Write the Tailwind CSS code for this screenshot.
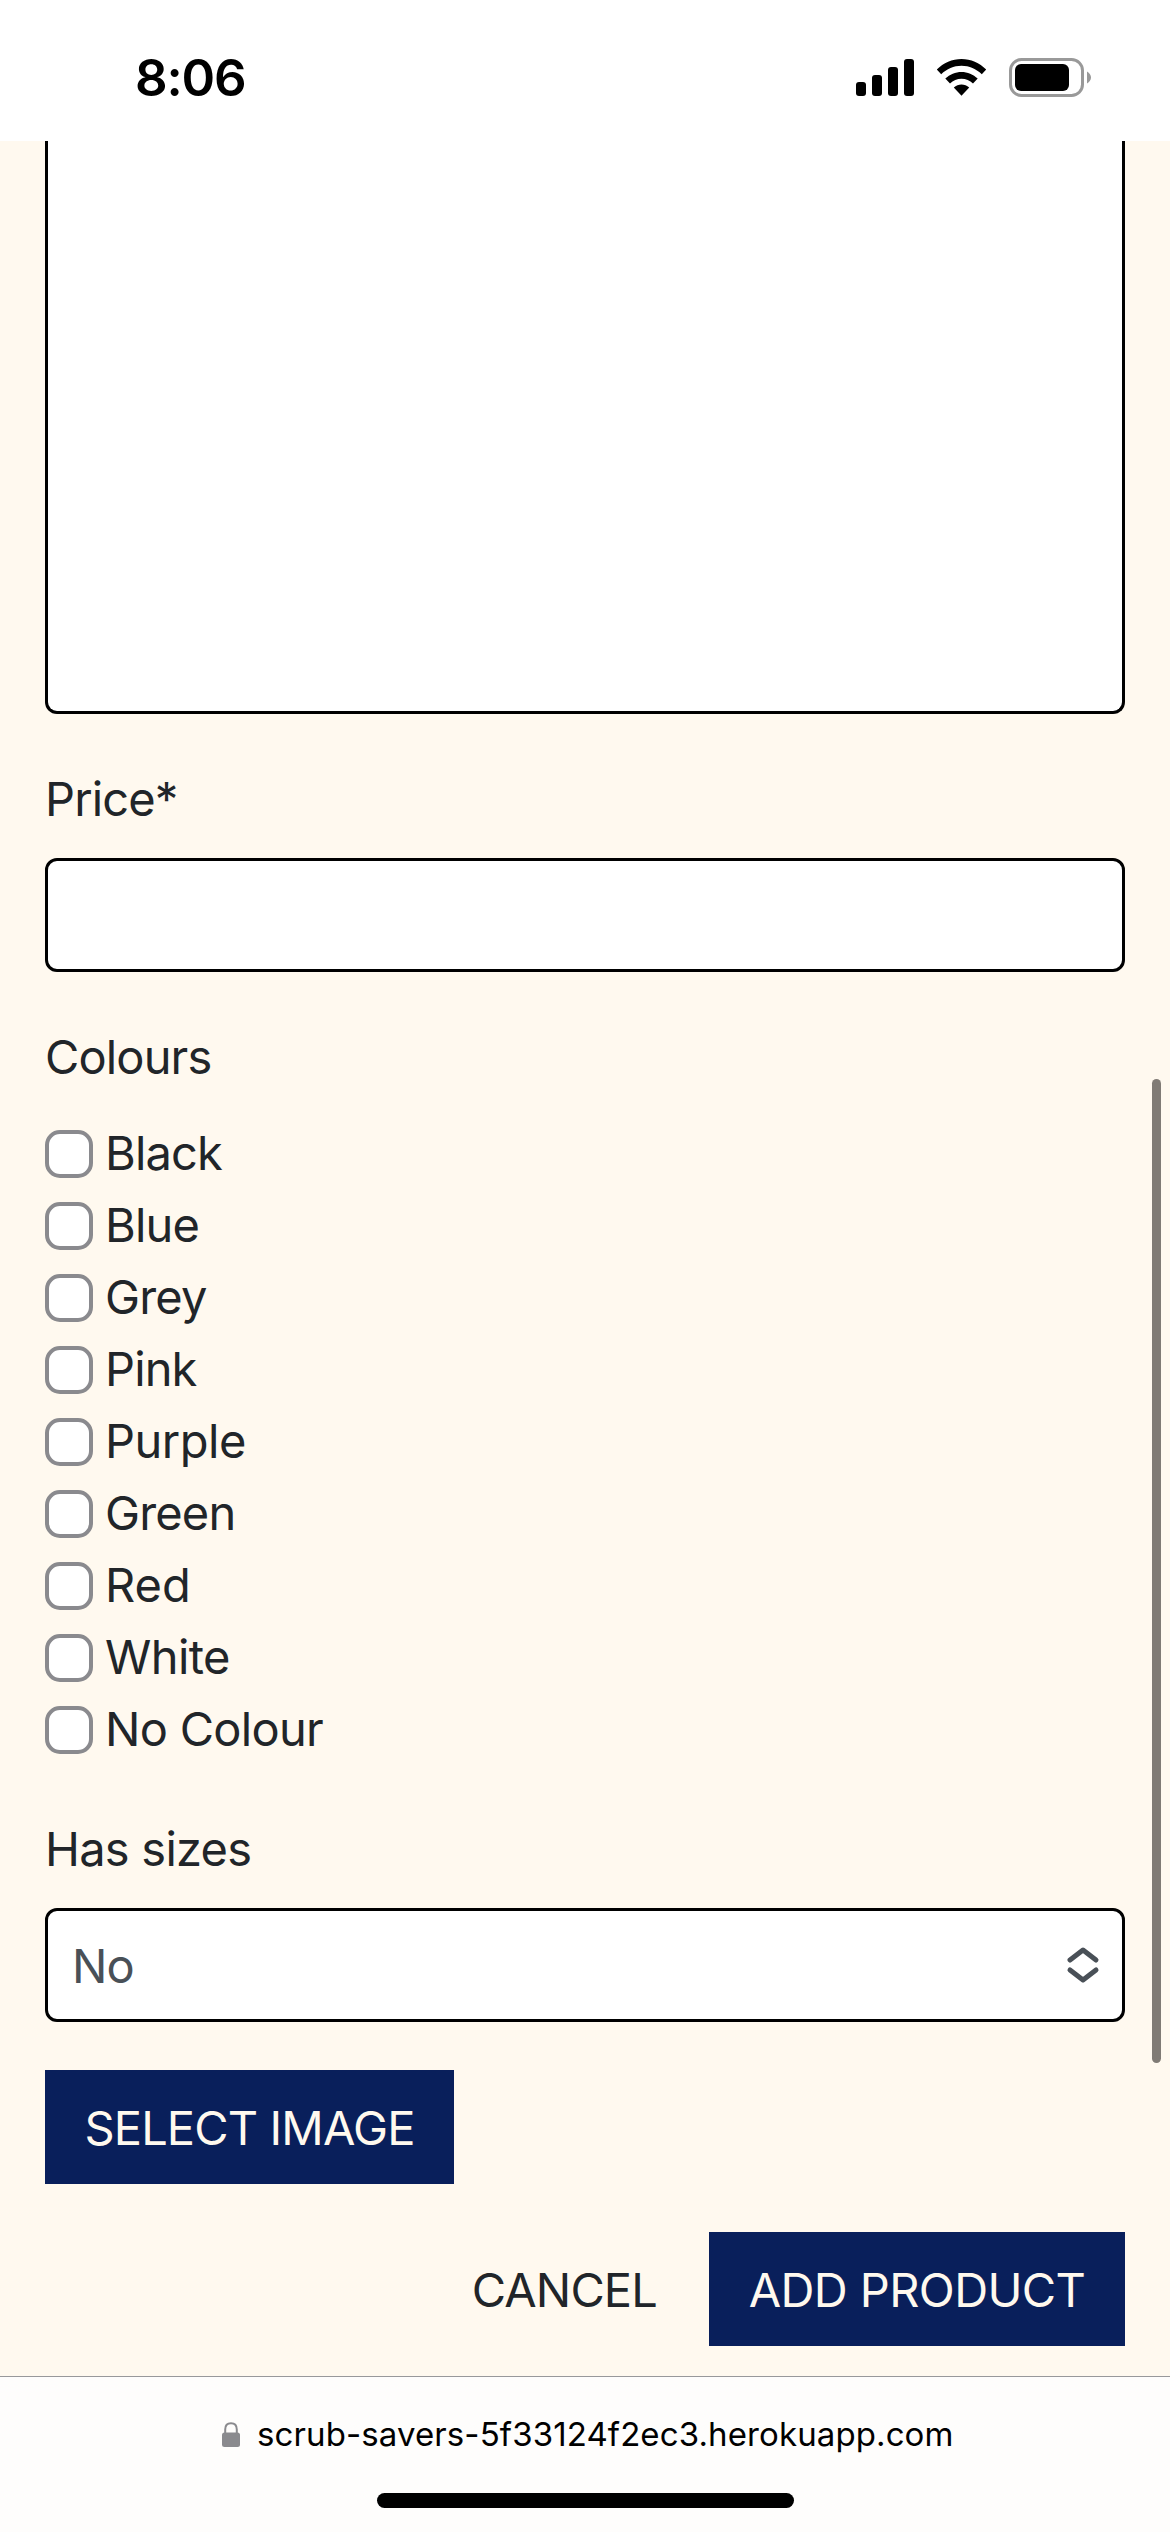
<!DOCTYPE html>
<html lang="en">
<head>
<meta charset="utf-8">
<title>Add product</title>
<script src="https://cdn.jsdelivr.net/npm/@tailwindcss/browser@4"></script>
</head>
<body class="w-[1170px] h-[2532px] overflow-hidden flex flex-col bg-[#fff9ef] text-[#212529] font-['Inter',sans-serif] text-[47px] tracking-[-0.85px]">

  <!-- Status bar -->
  <header class="h-[141px] shrink-0 bg-white text-black flex justify-between pl-[135px] pr-[77px]">
    <div class="mt-[46px] h-[62px] leading-[64px] text-[51px] font-semibold tracking-[-1.2px]">8:06</div>
    <svg class="mt-[54px] w-[238px] h-[48px] shrink-0" viewBox="855 54 238 48" fill="none">
      <g fill="#000">
        <rect x="856" y="82" width="10" height="14" rx="3"/>
        <rect x="872" y="75" width="10" height="21" rx="3"/>
        <rect x="888" y="67" width="10" height="29" rx="3"/>
        <rect x="904" y="59" width="10" height="37" rx="3"/>
        <path d="M936.800 69.600C943.500 62.800 952.200 59 961.500 59C970.800 59 979.500 62.800 986.200 69.600L981.800 74.300C976.300 68.900 969.200 65.800 961.500 65.800C953.800 65.800 946.700 68.900 941.200 74.300Z"/>
        <path d="M945.300 78.600C949.800 74.300 955.500 71.900 961.500 71.900C967.500 71.900 973.200 74.300 977.700 78.600L973 83.600C969.900 80.500 965.800 78.800 961.500 78.800C957.200 78.800 953.100 80.500 950 83.600Z"/>
        <path d="M953.800 87.500C956 85.600 958.700 84.600 961.500 84.600C964.300 84.600 967 85.600 969.200 87.500L961.500 95.800Z"/>
      </g>
      <rect x="1010.500" y="59.500" width="72" height="36" rx="11" stroke="#999" stroke-width="3"/>
      <rect x="1015" y="64" width="54" height="27" rx="6" fill="#000"/>
      <path d="M1087 71.500C1089.500 73 1091 75.200 1091 77.500C1091 79.800 1089.500 82 1087 83.500Z" fill="#999"/>
    </svg>
  </header>

  <!-- Product form -->
  <main class="relative h-[2235px] shrink-0 px-[45px]">
    <div class="h-[573px] bg-white border-3 border-t-0 border-black rounded-b-[12px]"></div>

    <div class="mt-12 h-18 leading-[74px]">Price*</div>
    <div class="mt-6 h-[114px] bg-white border-3 border-black rounded-[12px]"></div>

    <div class="mt-12 h-18 leading-[74px]">Colours</div>
    <ul class="mt-6 leading-[74px]">
      <li class="h-18 flex gap-3"><span class="mt-[14px] size-12 bg-white border-4 border-[#8a8a8e] rounded-[15px]"></span>Black</li>
      <li class="h-18 flex gap-3"><span class="mt-[14px] size-12 bg-white border-4 border-[#8a8a8e] rounded-[15px]"></span>Blue</li>
      <li class="h-18 flex gap-3"><span class="mt-[14px] size-12 bg-white border-4 border-[#8a8a8e] rounded-[15px]"></span>Grey</li>
      <li class="h-18 flex gap-3"><span class="mt-[14px] size-12 bg-white border-4 border-[#8a8a8e] rounded-[15px]"></span>Pink</li>
      <li class="h-18 flex gap-3 tracking-[-0.5px]"><span class="mt-[14px] size-12 bg-white border-4 border-[#8a8a8e] rounded-[15px]"></span>Purple</li>
      <li class="h-18 flex gap-3"><span class="mt-[14px] size-12 bg-white border-4 border-[#8a8a8e] rounded-[15px]"></span>Green</li>
      <li class="h-18 flex gap-3 tracking-[0px]"><span class="mt-[14px] size-12 bg-white border-4 border-[#8a8a8e] rounded-[15px]"></span>Red</li>
      <li class="h-18 flex gap-3 tracking-[-0.6px]"><span class="mt-[14px] size-12 bg-white border-4 border-[#8a8a8e] rounded-[15px]"></span>White</li>
      <li class="h-18 flex gap-3 tracking-[-0.7px]"><span class="mt-[14px] size-12 bg-white border-4 border-[#8a8a8e] rounded-[15px]"></span>No Colour</li>
    </ul>

    <div class="mt-12 h-18 leading-[74px] tracking-[-0.75px]">Has sizes</div>
    <div class="mt-6 h-[114px] bg-white border-3 border-black rounded-[12px] flex items-center justify-between pl-[24px] pr-[22px] text-[#495057]">
      <span class="h-[108px] leading-[110px]">No</span>
      <svg class="w-[34px] h-[38px]" viewBox="0 0 34 38" fill="none" stroke="currentColor" stroke-width="5" stroke-linecap="round" stroke-linejoin="round"><path d="M4 14L17 4L30 14M4 24L17 34L30 24"/></svg>
    </div>

    <div class="mt-12 w-[409px] h-[114px] bg-[#091f5b] text-[#fff9ef] text-center leading-[116px]">SELECT IMAGE</div>

    <div class="mt-12 flex justify-end leading-[116px]">
      <div class="h-[114px] pr-[52px]">CANCEL</div>
      <div class="w-[416px] h-[114px] bg-[#091f5b] text-[#fff9ef] text-center tracking-[-0.6px]">ADD PRODUCT</div>
    </div>

    <!-- Scroll indicator -->
    <div class="absolute right-[9px] top-[938px] w-[9px] h-[984px] rounded-full bg-[#807b75]"></div>
  </main>

  <!-- Browser address bar -->
  <footer class="h-[156px] shrink-0 bg-[#fefdfc] border-t border-[#98989b] text-black">
    <div class="h-[116px] flex pl-[222px] gap-[17px]">
      <svg class="mt-[45px] w-[18px] h-[25px]" viewBox="0 0 18 25" fill="none"><rect y="10.500" width="18" height="14.500" rx="2.500" fill="#8a8a8e"/><path d="M3.200 12V7.500C3.200 3.500 5.600 1.200 9 1.200S14.800 3.500 14.800 7.500V12" stroke="#8a8a8e" stroke-width="2"/></svg>
      <span class="mt-[36px] leading-[42px] text-[33px] tracking-[0.11px] whitespace-nowrap">scrub-savers-5f33124f2ec3.herokuapp.com</span>
    </div>
    <div class="mx-auto w-[417px] h-[15px] rounded-full bg-black"></div>
  </footer>
</body>
</html>
